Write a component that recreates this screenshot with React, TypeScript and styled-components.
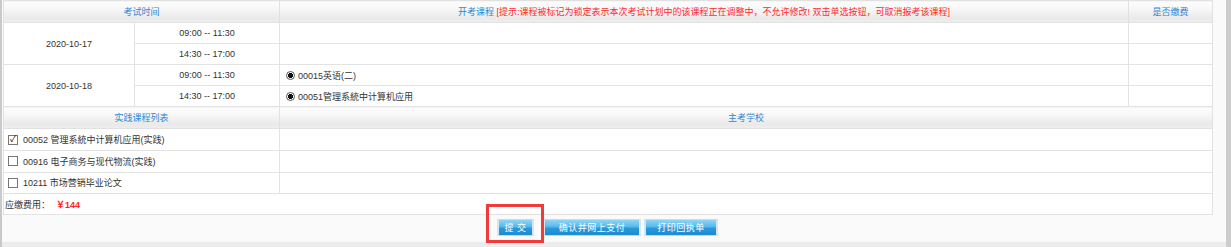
import React from "react";
import styled, { createGlobalStyle } from "styled-components";

const Global = createGlobalStyle`
  html, body { margin: 0; padding: 0; }
  body {
    width: 1231px;
    height: 247px;
    overflow: hidden;
    font-family: "Liberation Sans", "Noto Sans CJK SC", sans-serif;
    font-size: 9px;
    color: #333;
    background: #fafafa;
  }
`;

const Frame = styled.div`
  display: flex;
  width: 1231px;
  height: 247px;
`;

const LeftEdge = styled.div`
  width: 2px;
  background: #c9c9c9;
  flex: none;
`;

const Main = styled.div`
  flex: 1;
  display: flex;
  flex-direction: column;
  min-width: 0;
`;

const Content = styled.div`
  flex: 1;
  padding: 0 13px 0 1px;
  background: #fafafa;
`;

const BottomBand = styled.div`
  height: 5px;
  background: #ececec;
  flex: none;
`;

const Scrollbar = styled.div`
  width: 5px;
  background: #cdcdcd;
  flex: none;
`;

const Table = styled.table`
  width: 1209px;
  border-collapse: collapse;
  table-layout: fixed;
  background: #fff;
`;

const HeadCell = styled.td<{ $align?: string }>`
  height: 21px;
  padding: 0;
  border: 1px solid #e1e1e1;
  background: linear-gradient(#fdfdfd 0%, #f6f6f6 40%, #e9e9e9 80%, #eeeeee 100%);
  color: #2d87d3;
  text-align: ${(p) => p.$align || "center"};
  vertical-align: middle;
  white-space: nowrap;
`;

const Cell = styled.td<{ $align?: string; $h?: number }>`
  height: ${(p) => p.$h ?? 20}px;
  padding: 0;
  border: 1px solid #e3e3e3;
  text-align: ${(p) => p.$align || "left"};
  vertical-align: middle;
  white-space: nowrap;
  color: #333;
`;

const Hint = styled.span`
  color: #ff2b2b;
`;

const Option = styled.span`
  display: inline-flex;
  align-items: center;
  gap: 3px;
`;

const Radio = styled.span`
  display: inline-block;
  width: 9px;
  height: 9px;
  box-sizing: border-box;
  border: 1px solid #555;
  border-radius: 50%;
  background: radial-gradient(circle, #111 0 2.3px, #fff 2.8px);
  margin-left: 6px;
`;

const Check = styled.span`
  display: inline-flex;
  align-items: center;
  justify-content: center;
  width: 10px;
  height: 10px;
  box-sizing: border-box;
  border: 1px solid #777;
  background: #fff;
  margin-left: 4px;
  margin-right: 2px;
  color: #222;
  font-size: 9px;
  line-height: 1;
`;

const FeeLabel = styled.span`
  margin-left: 1px;
`;

const FeeValue = styled.span`
  color: #ff2020;
  margin-left: 6px;
  font-weight: bold;
`;

const ButtonBar = styled.div`
  display: flex;
  justify-content: center;
  gap: 3px;
  width: 1209px;
  padding-top: 4px;
`;

const ButtonWrap = styled.div`
  position: relative;
  margin-right: 6px;
`;

const Button = styled.button<{ $w: number }>`
  width: ${(p) => p.$w}px;
  height: 17px;
  padding: 0;
  border: 1px solid #c7dbe8;
  border-left: 2px solid #d6e6f0;
  border-right: 2px solid #d6e6f0;
  background: linear-gradient(#8fd4f6 0%, #57b8ea 45%, #2a98da 55%, #1d8bd2 100%);
  color: #fff;
  font-family: "Liberation Sans", "Noto Sans CJK SC", sans-serif;
  font-size: 9px;
  letter-spacing: 0.5px;
  cursor: pointer;
`;

const Highlight = styled.div`
  position: absolute;
  left: -11px;
  top: -15px;
  width: 58px;
  height: 39px;
  box-sizing: border-box;
  border: 3px solid #f23a3a;
  pointer-events: none;
`;

export default function App() {
  return (
    <>
      <Global />
      <Frame>
        <LeftEdge />
        <Main>
          <Content>
            <Table>
              <colgroup>
                <col style={{ width: 131 }} />
                <col style={{ width: 145 }} />
                <col style={{ width: 849 }} />
                <col style={{ width: 84 }} />
              </colgroup>
              <tbody>
                <tr>
                  <HeadCell colSpan={2}>考试时间</HeadCell>
                  <HeadCell>
                    开考课程{" "}
                    <Hint>
                      [提示:课程被标记为锁定表示本次考试计划中的该课程正在调整中，不允许修改! 双击单选按钮，可取消报考该课程]
                    </Hint>
                  </HeadCell>
                  <HeadCell>是否缴费</HeadCell>
                </tr>
                <tr>
                  <Cell rowSpan={2} $align="center">2020-10-17</Cell>
                  <Cell $align="center">09:00 -- 11:30</Cell>
                  <Cell />
                  <Cell />
                </tr>
                <tr>
                  <Cell $align="center">14:30 -- 17:00</Cell>
                  <Cell />
                  <Cell />
                </tr>
                <tr>
                  <Cell rowSpan={2} $align="center">2020-10-18</Cell>
                  <Cell $align="center">09:00 -- 11:30</Cell>
                  <Cell>
                    <Option><Radio />00015英语(二)</Option>
                  </Cell>
                  <Cell />
                </tr>
                <tr>
                  <Cell $align="center">14:30 -- 17:00</Cell>
                  <Cell>
                    <Option><Radio />00051管理系統中计算机应用</Option>
                  </Cell>
                  <Cell />
                </tr>
                <tr>
                  <HeadCell colSpan={2}>实践课程列表</HeadCell>
                  <HeadCell colSpan={2}>主考学校</HeadCell>
                </tr>
                <tr>
                  <Cell colSpan={2} $h={21}>
                    <Option><Check>✓</Check>00052 管理系統中计算机应用(实践)</Option>
                  </Cell>
                  <Cell colSpan={2} $h={21} />
                </tr>
                <tr>
                  <Cell colSpan={2} $h={21}>
                    <Option><Check />00916 电子商务与现代物流(实践)</Option>
                  </Cell>
                  <Cell colSpan={2} $h={21} />
                </tr>
                <tr>
                  <Cell colSpan={2}>
                    <Option><Check />10211 市场营销毕业论文</Option>
                  </Cell>
                  <Cell colSpan={2} />
                </tr>
                <tr>
                  <Cell colSpan={4}>
                    <FeeLabel>应缴费用：</FeeLabel>
                    <FeeValue>￥144</FeeValue>
                  </Cell>
                </tr>
              </tbody>
            </Table>
            <ButtonBar>
              <ButtonWrap>
                <Button $w={37}>提 交</Button>
                <Highlight />
              </ButtonWrap>
              <Button $w={98}>确认并网上支付</Button>
              <Button $w={74}>打印回执单</Button>
            </ButtonBar>
          </Content>
          <BottomBand />
        </Main>
        <Scrollbar />
      </Frame>
    </>
  );
}
